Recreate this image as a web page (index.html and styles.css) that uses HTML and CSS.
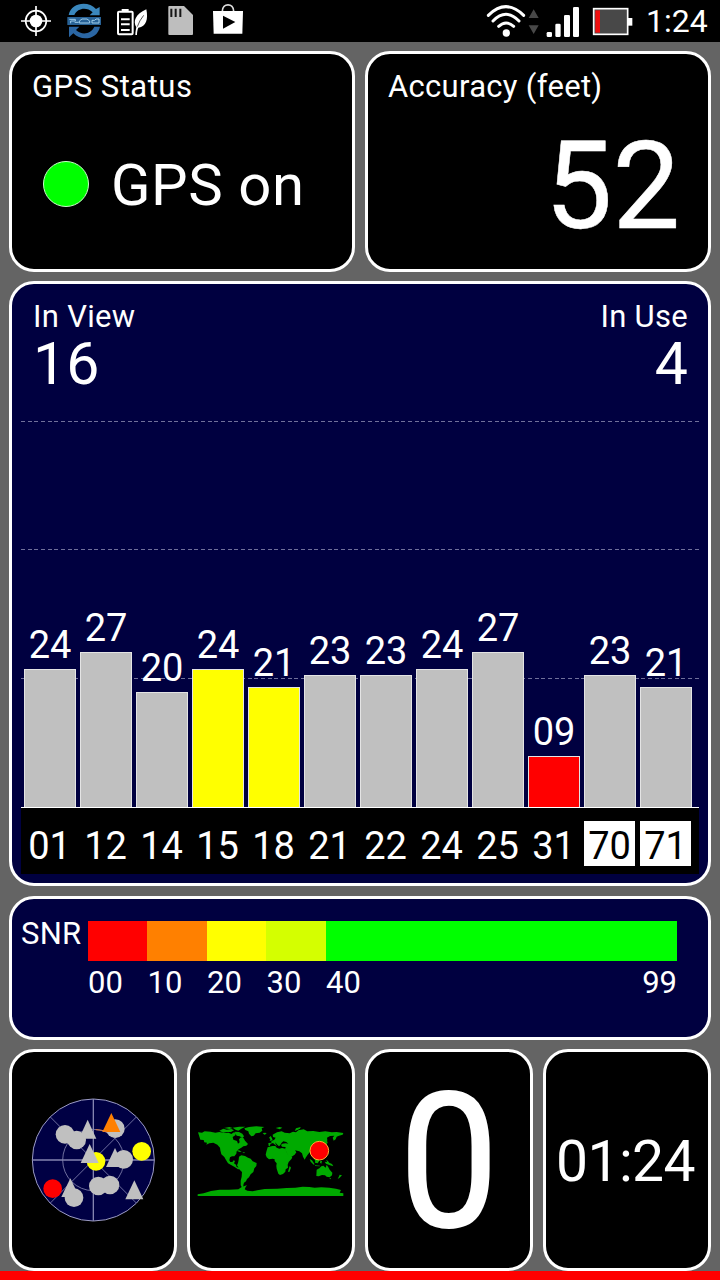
FILE: index.html
```
<!DOCTYPE html>
<html lang="en">
<head>
    <meta charset="UTF-8">
    <meta name="viewport" content="width=device-width, initial-scale=1.0">
    <title>GPS Test</title>
    <link rel="stylesheet" href="styles.css">
</head>
<body>
    <header class="status-bar">
        <div class="status-left">
            <!-- location -->
            <svg width="32" height="42" viewBox="60 0 96 126">
                <circle cx="108" cy="63" r="31" fill="none" stroke="#fff" stroke-width="5"/>
                <circle cx="108" cy="63" r="19" fill="#fff"/>
                <path d="M108 18v90M63 63h90" stroke="#fff" stroke-width="5"/>
            </svg>
            <!-- sync -->
            <svg width="36" height="42" viewBox="198 0 108 126">
                <path d="M206 45C214 6 266 2 288 27L299 21V46H269L278 37C260 20 233 24 223 45Z" fill="#3a87bd"/>
                <path d="M300 80C292 119 244 125 220 100L207 112V80H238L228 90C246 107 273 102 283 80Z" fill="#2b66a3"/>
                <rect x="202" y="51" width="101" height="24" fill="#286296"/>
                <path d="M208 58h18v5h-14v7M238 69v-6l8-6h15l8 6v6zM276 69v-8h8l4-4h9v12zM224 67h12" fill="none" stroke="#9fcdea" stroke-width="3"/>
            </svg>
            <!-- power saver -->
            <svg width="37" height="42" viewBox="348 0 111 126">
                <rect x="354" y="35" width="44" height="68" rx="3" fill="none" stroke="#fff" stroke-width="6"/>
                <path d="M365 27h21v8h-21z" fill="#fff"/>
                <path d="M363 58h26M363 73h26M363 90h26" stroke="#fff" stroke-width="6"/>
                <path d="M439 28C445 58 439 80 415 83C412 90 411 98 411 105H406C406 96 408 88 409 82C398 64 406 43 439 28Z" fill="#fff"/>
                <path d="M431 46Q418 62 412 80" fill="none" stroke="#000" stroke-width="2"/>
            </svg>
            <!-- sd card -->
            <svg width="31" height="42" viewBox="501 0 93 126">
                <path d="M507 18h45l27 27v57q0 3-3 3h-68q-3 0-3-3V21q0-3 2-3z" fill="#bebebe"/>
                <path d="M514 26v25M527 26v25M541 26v25" stroke="#161616" stroke-width="6"/>
            </svg>
            <!-- play store -->
            <svg width="32" height="42" viewBox="636 0 96 126">
                <path d="M667 34C667 8 701 8 701 34" fill="none" stroke="#ddd" stroke-width="5"/>
                <path d="M639 33h90l-2 68h-86z" fill="#fff"/>
                <path d="M669 47v39l37-20z" fill="#000"/>
            </svg>
        </div>
        <div class="status-right">
            <svg class="wifi" width="55" height="42" viewBox="45 0 165 126">
                <g fill="none" stroke="#fff" stroke-width="9" stroke-linecap="round">
                    <path d="M55 46Q108-6 161 46"/>
                    <path d="M69 63Q108 23 147 63"/>
                    <path d="M86 79Q108 59 131 79"/>
                </g>
                <circle cx="109" cy="99" r="11" fill="#fff"/>
                <path d="M191 28l15 26h-30zM191 102l15-26h-30z" fill="#484848"/>
            </svg>
            <svg class="signal" width="36" height="42" viewBox="225 0 108 126">
                <g fill="#fff">
                    <rect x="230" y="96" width="16" height="15" rx="4"/>
                    <rect x="256" y="71" width="16" height="40" rx="4"/>
                    <rect x="282" y="45" width="18" height="66" rx="4"/>
                    <rect x="309" y="21" width="18" height="90" rx="4"/>
                </g>
            </svg>
            <svg class="battery" width="42" height="42" viewBox="366 0 126 126">
                <rect x="371" y="26" width="102" height="77" fill="#484848" stroke="#fff" stroke-width="5"/>
                <rect x="376" y="31" width="14" height="67" fill="#f00f0f"/>
                <path d="M474 54h13v23h-13z" fill="#fff"/>
            </svg>
            <span class="clock">1:24</span>
        </div>
    </header>

    <main class="dashboard">
        <div class="row">
            <section class="panel gps">
                <h2>GPS Status</h2>
                <div class="gps-state"><span class="dot"></span>GPS on</div>
            </section>
            <section class="panel accuracy">
                <h2>Accuracy (feet)</h2>
                <div class="accuracy-value">52</div>
            </section>
        </div>

        <section class="panel blue signal-panel">
            <div class="counts">
                <div>
                    <h2>In View</h2>
                    <div class="count">16</div>
                </div>
                <div class="count-right">
                    <h2>In Use</h2>
                    <div class="count">4</div>
                </div>
            </div>
            <div class="plot">
                <div class="sat"><span>24</span><div class="bar" style="height: 138px"></div></div>
                <div class="sat"><span>27</span><div class="bar" style="height: 155px"></div></div>
                <div class="sat"><span>20</span><div class="bar" style="height: 115px"></div></div>
                <div class="sat"><span>24</span><div class="bar yellow" style="height: 138px"></div></div>
                <div class="sat"><span>21</span><div class="bar yellow" style="height: 120px"></div></div>
                <div class="sat"><span>23</span><div class="bar" style="height: 132px"></div></div>
                <div class="sat"><span>23</span><div class="bar" style="height: 132px"></div></div>
                <div class="sat"><span>24</span><div class="bar" style="height: 138px"></div></div>
                <div class="sat"><span>27</span><div class="bar" style="height: 155px"></div></div>
                <div class="sat"><span>09</span><div class="bar red" style="height: 51px"></div></div>
                <div class="sat"><span>23</span><div class="bar" style="height: 132px"></div></div>
                <div class="sat"><span>21</span><div class="bar" style="height: 120px"></div></div>
            </div>
            <div class="prns">
                <span>01</span>
                <span>12</span>
                <span>14</span>
                <span>15</span>
                <span>18</span>
                <span>21</span>
                <span>22</span>
                <span>24</span>
                <span>25</span>
                <span>31</span>
                <span class="glonass">70</span>
                <span class="glonass">71</span>
            </div>
        </section>

        <section class="panel blue snr">
            <h2>SNR</h2>
            <div class="scale">
                <div class="scale-bar">
                    <i class="s00"></i><i class="s10"></i><i class="s20"></i><i class="s30"></i><i class="s40"></i>
                </div>
                <div class="scale-labels">
                    <span>00</span><span>10</span><span>20</span><span>30</span><span class="last"><b>40</b><b>99</b></span>
                </div>
            </div>
        </section>

        <div class="row tiles">
            <section class="panel tile">
                <svg width="150" height="150" viewBox="-6 0 450 450">
                    <circle cx="220" cy="225" r="183" fill="#000044" stroke="#9c9cc4" stroke-width="3"/>
                    <g fill="none" stroke="#8484b0" stroke-width="2.5">
                        <circle cx="220" cy="225" r="92"/>
                        <path d="M91 96L349 354M349 96L91 354"/>
                        <path d="M220 42V408M37 225H403" stroke-width="4"/>
                    </g>
                    <g fill="#c0c0c0">
                        <circle cx="135" cy="148" r="28"/>
                        <circle cx="170" cy="165" r="28"/>
                        <path d="M203 104l26 57h-52z"/>
                        <circle cx="286" cy="131" r="28"/>
                    </g>
                    <path d="M274 84l27 57h-54z" fill="#ff8000"/>
                    <path d="M227 134q20 0 34 7" fill="none" stroke="#e08040" stroke-width="3"/>
                    <circle cx="365" cy="199" r="28" fill="#ff0"/>
                    <circle cx="228" cy="229" r="28" fill="#ff0"/>
                    <g fill="#c0c0c0">
                        <path d="M209 177l27 57h-54z"/>
                        <path d="M285 189l27 57h-54z"/>
                        <circle cx="311" cy="223" r="28"/>
                        <circle cx="235" cy="303" r="28"/>
                        <circle cx="270" cy="300" r="28"/>
                        <path d="M151 280l27 56h-54z"/>
                        <circle cx="162" cy="338" r="28"/>
                        <path d="M343 286l27 57h-54z"/>
                    </g>
                    <circle cx="98" cy="311" r="28" fill="#f00"/>
                </svg>
            </section>
            <section class="panel tile map">
                <svg width="160" height="100" viewBox="0 0 480 300">
                    <g fill="#00aa00">
                        <!-- north america -->
                        <path d="M24 67l12 1 8-4 18 1 14 3 12-2 16 3 12-1 8 4 8-5 6 2-2 7-8 5 2 8 11 4 3 8 5-4-2-9 6-6 8 3 4 7 9 10-5 5-9 2-6 4-8 5-6 6-1 7-6 8-7 0-6 3-2 9 3 5 6 0 4-5 4 2-3 7 6 4 2 7 8 2 4 4-8 1-10-7-12-7-8-4-6-10-5-9-9-8-3-12-1-8-8-9-12-6-12 2-9 4 2-6-8-1-2-7-10-1z"/>
                        <path d="M88 62l12-6 10 3 14-2 8 4-9 5-13 0-10 2zM102 54l16-3 10 3-10 3zM128 53l20-3 18 0-12 6-9 6-7-2zM134 65l13 1 10 5 5 8-4 5-9-5-9-2-3-5z"/>
                        <path d="M163 55l14-4 22-2 24 2-8 4 2 7-8 6-12 2-6 7-7 2-7-8-2-7-9-4z"/>
                        <path d="M139 122l8-1 8 4-6 1zM157 127h8l-3 3z"/>
                        <!-- south america -->
                        <path d="M147 140l7-4 11 2 9 5 8 3 6 8 12 5-1 9-6 7-3 11-8 7-5 9-6 5-3 7-6 4-2 7 0 6 4 4-7-1-5-8 0-14 3-12 1-14-7-7-8-13 3-7 2-10z"/>
                        <!-- north atlantic islands -->
                        <path d="M218 69l8-1 4 3-7 3zM237 83l5-5 4 7 2 6-9 2 2-5zM257 54l12-3 8 2-8 5z"/>
                        <!-- europe and asia -->
                        <path d="M236 108L235 99L244 98V94L253 89L257 83L249 81L248 74L261 67L275 64L284 68L299 70L309 65L318 67L325 61L341 58L352 64L370 63L388 66L406 64L425 67L440 66L460 69L458 74L447 77L440 80L437 88L431 92L428 83L433 77L420 78L411 83L412 90L410 98L402 101L398 108L402 120L396 130L386 135L377 137L379 147L382 158L376 153L370 143L366 134L360 126L353 134L347 143L344 149L339 140L336 130L328 124L315 121L319 127L314 134L302 142L296 142L290 128L285 118L287 111L276 110L273 105L277 101L287 100L295 101L289 96L280 94L275 98L271 105L267 109L262 104L255 97L258 104L262 109L256 105L249 99L242 101L239 108Z"/>
                        <path d="M318 55l14-4-2 5-8 4-8 3zM407 96l4-4 2 6-5 8-7 3 3-6z"/>
                        <!-- africa -->
                        <path d="M233 112l14-4 9 0 4 5 8 3 8-2 10 2 4 10 7 13 10 1-2 6-9 10-3 8 1 9-7 5-1 7-7 7-9 3-5-4-5-15-1-8 1-8-6-7 0-5-6-2-11 2-7-6-3-8 2-9z"/>
                        <path d="M299 168l4 5-5 13-4-1z"/>
                        <!-- islands -->
                        <path d="M359 147l7 4 8 12-3 1-9-9zM376 150l8-3 4 5-5 8-8-2zM391 152l5 1-2 8-4-3zM375 166l15 1-1 2-14-1zM404 155l10 2 12 5 4 7-10-3-12-5zM408 150l5 2 5 6-6-1z"/>
                        <!-- australia -->
                        <path d="M380 179l8-4 6-6 6-2 7 6 3-9 5 8 4 7 8 9-1 8-7 6-9-2-5-4-9-1-10 4-7-1z"/>
                        <path d="M449 194l7 2-7 7-6 4 3-6zM418 204h5l-2 4z"/>
                        <!-- antarctica -->
                        <path d="M23 258v-5l18-3 22-7 26-4 28 0 28-1 9-6 11-5 6-1-4 5-3 7 8 4 16 2 14-3 22-4 38-1 28-2 26-1 22-3 20 1 16 2 20-1 24 1 20 3 15 4-4 8 11 2v8z"/>
                    </g>
                    <circle cx="388" cy="122" r="28" fill="#f00" stroke="#ffb030" stroke-width="3"/>
                </svg>
            </section>
            <section class="panel tile speed"><span>0</span></section>
            <section class="panel tile time">01:24</section>
        </div>
    </main>
    <div class="bottom-line"></div>
</body>
</html>
```
FILE: styles.css
```
* {
    box-sizing: border-box;
}

body {
    margin: 0;
    width: 720px;
    height: 1280px;
    display: flex;
    flex-direction: column;
    overflow: hidden;
    background: #646464;
    color: #fff;
    font-family: Roboto, sans-serif;
}

svg {
    display: block;
    flex: none;
}

h2 {
    margin: 0;
    font-size: 31px;
    font-weight: 400;
    line-height: 36px;
    letter-spacing: 0.3px;
}

/* status bar */
.status-bar {
    height: 42px;
    padding: 0 12px 0 20px;
    display: flex;
    justify-content: space-between;
    background: #000;
}

.status-left {
    display: flex;
    gap: 14px;
}

.status-right {
    display: flex;
}

.signal {
    margin-left: 5px;
}

.battery {
    margin-left: 11px;
}

.clock {
    width: 62px;
    margin-left: 12px;
    font-size: 32px;
    line-height: 42px;
}

/* panels */
.dashboard {
    padding: 9px 9px 0;
}

.row {
    display: flex;
    gap: 10px;
}

.panel {
    flex: 1;
    border: 3px solid #fff;
    border-radius: 25px;
    background: #000;
}

.blue {
    background: #000040;
}

.gps,
.accuracy {
    height: 221px;
    padding: 15px 20px;
}

.gps h2 {
    letter-spacing: 0.5px;
}

.gps-state {
    display: flex;
    align-items: center;
    gap: 22px;
    margin: 46px 0 0 11px;
    font-size: 58px;
    line-height: 68px;
    letter-spacing: 0.6px;
}

.dot {
    width: 46px;
    height: 46px;
    margin-bottom: 2px;
    border: 1px solid #c8ffc8;
    border-radius: 50%;
    background: #0f0;
}

.accuracy-value {
    margin-top: 11px;
    padding-right: 8px;
    text-align: right;
    font-size: 123px;
    line-height: 140px;
    -webkit-text-stroke: 0.5px #fff;
    transform: scaleX(0.98);
    transform-origin: right;
}

/* satellites */
.signal-panel {
    height: 605px;
    margin-top: 9px;
    padding: 15px 9px 0;
}

.counts {
    height: 112px;
    padding: 0 11px 0 12px;
    display: flex;
    justify-content: space-between;
}

.count {
    font-size: 59px;
    line-height: 58px;
}

.count-right {
    text-align: right;
}

.plot {
    --dash: repeating-linear-gradient(90deg, #70709a 0 4px, transparent 4px 6.67px);
    height: 397px;
    padding: 0 3px;
    display: flex;
    gap: 4px;
    border-bottom: 1px solid #fff;
    background: var(--dash) 0 10px / 100% 1px no-repeat,
                var(--dash) 0 138px / 100% 1px no-repeat,
                var(--dash) 0 267px / 100% 1px no-repeat;
}

.sat {
    width: 52px;
    display: flex;
    flex-direction: column;
    justify-content: flex-end;
    text-align: center;
    font-size: 38px;
    line-height: 44px;
}

.sat span {
    margin-bottom: 2px;
}

.bar {
    border: 1px solid #e4e4e4;
    border-bottom: 0;
    background: #c0c0c0;
}

.yellow {
    background: #ff0;
}

.red {
    background: #f00;
}

.prns {
    height: 66px;
    padding: 13px 3px 0;
    display: flex;
    gap: 5px;
    background: #000;
    font-size: 38px;
    line-height: 51px;
    text-align: center;
}

.prns span {
    width: 51px;
    height: 45px;
}

.glonass {
    background: #fff;
    color: #000;
}

/* snr scale */
.snr {
    height: 144px;
    margin-top: 10px;
    padding: 16px 31px 0 9px;
    display: flex;
}

.snr h2 {
    width: 67px;
    padding-top: 1px;
}

.scale {
    flex: 1;
    padding-top: 6px;
}

.scale-bar,
.scale-labels {
    display: grid;
    grid-template-columns: 10fr 10fr 10fr 10fr 59fr;
}

.scale-bar {
    height: 40px;
}

.s00 { background: #f00; }
.s10 { background: #ff8000; }
.s20 { background: #ff0; }
.s30 { background: #d4ff00; }
.s40 { background: #0f0; }

.scale-labels {
    margin-top: 4px;
    font-size: 31px;
    line-height: 36px;
}

.scale-labels b {
    font-weight: 400;
}

.last {
    display: flex;
    justify-content: space-between;
}

/* bottom tiles */
.tiles {
    margin-top: 9px;
}

.tile {
    flex: none;
    width: 168px;
    height: 222px;
    display: flex;
    align-items: center;
    justify-content: center;
}

.map {
    justify-content: flex-start;
}

.speed {
    padding-top: 3px;
    font-size: 188px;
    line-height: 216px;
    -webkit-text-stroke: 2px #fff;
}

.speed span {
    transform: scaleX(0.94);
}

.time {
    padding: 2px 3px 0 0;
    font-size: 57px;
    letter-spacing: -0.6px;
}

.bottom-line {
    flex: 1;
    background: #f00;
}
```
